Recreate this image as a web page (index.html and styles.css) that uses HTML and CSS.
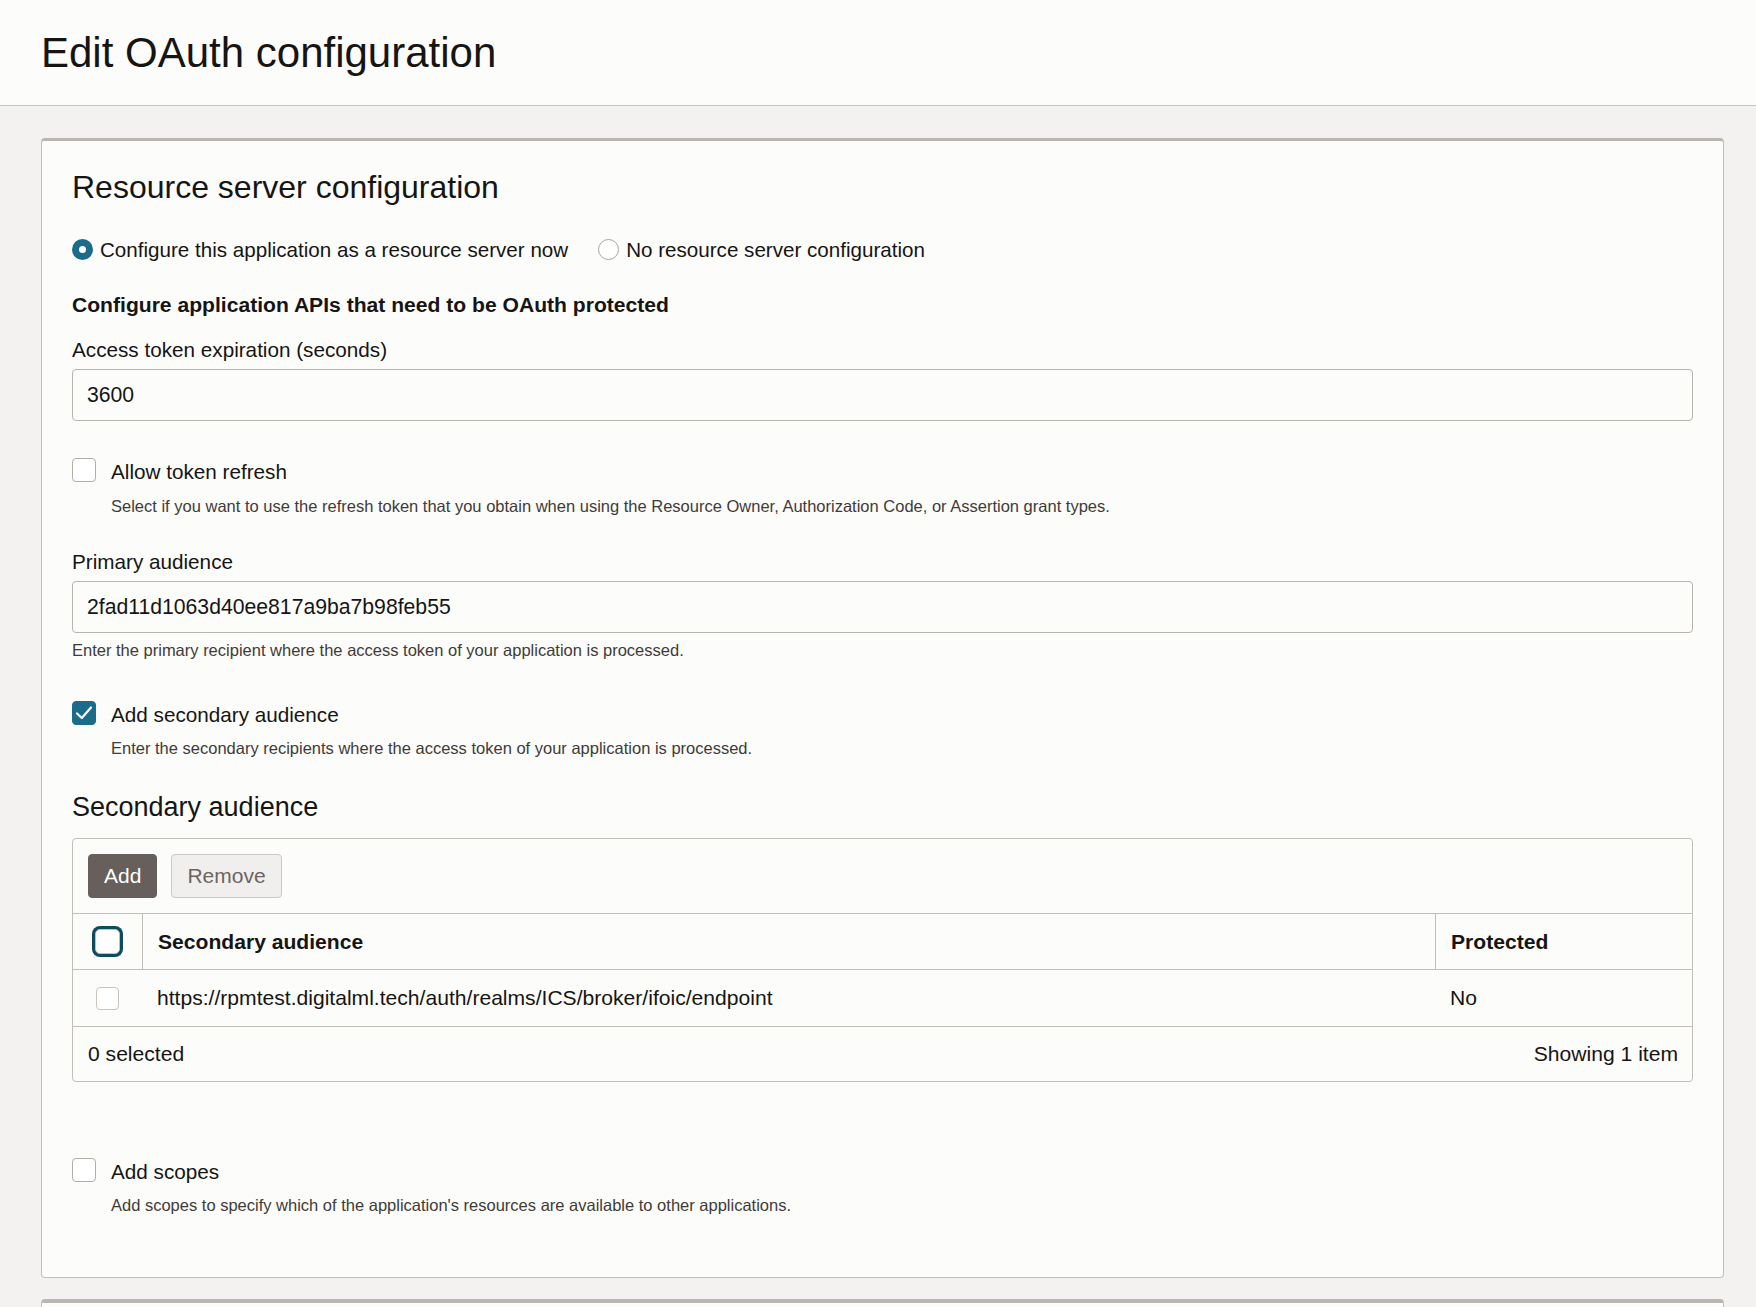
FILE: index.html
```
<!DOCTYPE html>
<html>
<head>
  <title>Edit OAuth configuration</title>
  <link rel="stylesheet" href="styles.css">
</head>
<body>
<div class="page_header">
  <h1>Edit OAuth configuration</h1>
</div>

<div class="page_main">
<div class="card">
  <h2 class="section_title">Resource server configuration</h2>

  <div class="radio_group">
    <span class="radio radio_on"></span>
    <span class="radio_label">Configure this application as a resource server now</span>
    <span class="radio"></span>
    <span class="radio_label">No resource server configuration</span>
  </div>

  <div class="group_heading">Configure application APIs that need to be OAuth protected</div>

  <div class="field_label">Access token expiration (seconds)</div>
  <input class="text_input" type="text" value="3600">

  <div class="check_row">
    <span class="checkbox"></span>
    <span class="check_label">Allow token refresh</span>
  </div>
  <div class="help help_indent">Select if you want to use the refresh token that you obtain when using the Resource Owner, Authorization Code, or Assertion grant types.</div>

  <div class="field_label field_label_gap">Primary audience</div>
  <input class="text_input" type="text" value="2fad11d1063d40ee817a9ba7b98feb55">
  <div class="help help_under">Enter the primary recipient where the access token of your application is processed.</div>

  <div class="check_row check_row_gap">
    <span class="checkbox checkbox_on">
      <svg width="24" height="24" viewBox="0 0 24 24"><polyline points="5,12.5 9.8,17 19,6.5" fill="none" stroke="#fff" stroke-width="2.2" stroke-linecap="round" stroke-linejoin="round"/></svg>
    </span>
    <span class="check_label">Add secondary audience</span>
  </div>
  <div class="help help_indent help_close">Enter the secondary recipients where the access token of your application is processed.</div>

  <h3 class="sub_title">Secondary audience</h3>

  <div class="table_box">
    <div class="toolbar">
      <button class="btn btn_dark">Add</button>
      <button class="btn btn_light">Remove</button>
    </div>
    <div class="trow thead">
      <div class="cell cell_check cell_div"><span class="checkbox checkbox_focus"></span></div>
      <div class="cell cell_main cell_div">Secondary audience</div>
      <div class="cell cell_prot">Protected</div>
    </div>
    <div class="trow tdata">
      <div class="cell cell_check"><span class="checkbox checkbox_small"></span></div>
      <div class="cell cell_main">https://rpmtest.digitalml.tech/auth/realms/ICS/broker/ifoic/endpoint</div>
      <div class="cell cell_prot cell_noline">No</div>
    </div>
    <div class="tfoot">
      <span>0 selected</span>
      <span>Showing 1 item</span>
    </div>
  </div>

  <div class="check_row check_row_scopes">
    <span class="checkbox"></span>
    <span class="check_label">Add scopes</span>
  </div>
  <div class="help help_indent help_close">Add scopes to specify which of the application's resources are available to other applications.</div>
</div>

<div class="card card_next"></div>
</div>

</body>
</html>
```

FILE: styles.css
```
html, body { margin:0px; padding:0px; }
body { background:#f3f2f1; color:#161513;
  font-family:"Liberation Sans", Arial, sans-serif; font-size:20.7px; }

/* шапка */
.page_header { background:#fcfcfb; border-bottom:1px solid #c9c5c0;
  padding:28px 41px 27px 41px; }
.page_header h1 { margin:0px; font-size:42px; line-height:50px; font-weight:normal; }

.page_main { padding:32px 32px 0px 41px; }

/* карточка */
.card { background:#fcfcfb; border:1px solid #c3beb8; border-top:3px solid #bcb6b0;
  border-radius:4px; padding:27px 30px 61px 30px; }
.card_next { margin-top:21px; padding:0px; height:4px; border-top-width:4px;
  border-bottom:none; border-radius:4px 4px 0 0; }

.section_title { margin:0px; font-size:32px; line-height:38px; font-weight:normal; }
.sub_title { margin:31px 0 0 0; font-size:27px; line-height:34px; font-weight:normal; }

/* радио */
.radio_group { margin-top:30px; display:flex; align-items:flex-start; line-height:28px;
  font-size:20.6px; }
.radio { width:21px; height:21px; box-sizing:border-box; border-radius:50%;
  border:1px solid #aaa49e; background:#fff; margin-top:3px; flex:none; }
.radio_on { border:7px solid #1b6c8b; }
.radio_label { margin-left:7px; margin-right:30px; }

.group_heading { margin-top:27px; line-height:28px; font-weight:bold; font-size:21.1px; }

.field_label { margin-top:17px; line-height:28px; }
.field_label_gap { margin-top:31px; }

.text_input { display:block; width:100%; box-sizing:border-box; height:52px; margin-top:5px;
  border:1px solid #b9b4ae; border-radius:4px; background:#fcfcfb; padding:0 14px;
  font-family:"Liberation Sans", Arial, sans-serif; font-size:21.2px; color:#161513; }

/* чекбоксы */
.check_row { margin-top:37px; display:flex; align-items:flex-start; line-height:28px; }
.check_row_gap { margin-top:40px; }
.check_row_scopes { margin-top:76px; }
.checkbox { width:24px; height:24px; box-sizing:border-box; border:1px solid #b3aea8;
  border-radius:4px; background:#fff; flex:none; display:inline-block; }
.checkbox_on { background:#1b6c8b; border-color:#1b6c8b; }
.checkbox_on svg { display:block; margin:-1px; }
.check_label { margin-left:15px; }

.help { font-size:16.5px; line-height:22px; color:#3f3b37; }
.help_indent { margin-top:9px; padding-left:39px; }
.help_close { margin-top:8px; }
.help_under { margin-top:6px; }

/* таблица */
.table_box { margin-top:14px; border:1px solid #c3beb8; border-radius:4px; font-size:21.1px; }
.toolbar { display:flex; gap:14px; padding:15px; border-bottom:1px solid #c3beb8; }
.btn { height:44px; padding:0 15px; border-radius:4px; font-family:"Liberation Sans", Arial, sans-serif;
  font-size:21px; }
.btn_dark { background:#665f5b; border:1px solid #665f5b; color:#fff; }
.btn_light { background:#f1efed; border:1px solid #cdc8c3; color:#6b6560; }

.trow { display:flex; border-bottom:1px solid #c3beb8; }
.thead { height:55px; font-weight:bold; }
.tdata { height:56px; }
.cell { display:flex; align-items:center; }
.cell_check { width:69px; justify-content:center; flex:none; }
.cell_main { flex:1; padding-left:15px; }
.cell_prot { width:241px; padding-left:15px; flex:none; }
.cell_div { border-right:1px solid #c3beb8; }
.cell_noline { width:242px; }
.checkbox_focus { width:25px; height:25px; border-color:#c4bfba; border-radius:5px;
  box-shadow:0 0 0 3px #0f4b5e; }
.checkbox_small { width:23px; height:23px; border-color:#c9c4bf; }
.tfoot { height:54px; display:flex; align-items:center; justify-content:space-between;
  padding:0 14px 0 15px; }
```
